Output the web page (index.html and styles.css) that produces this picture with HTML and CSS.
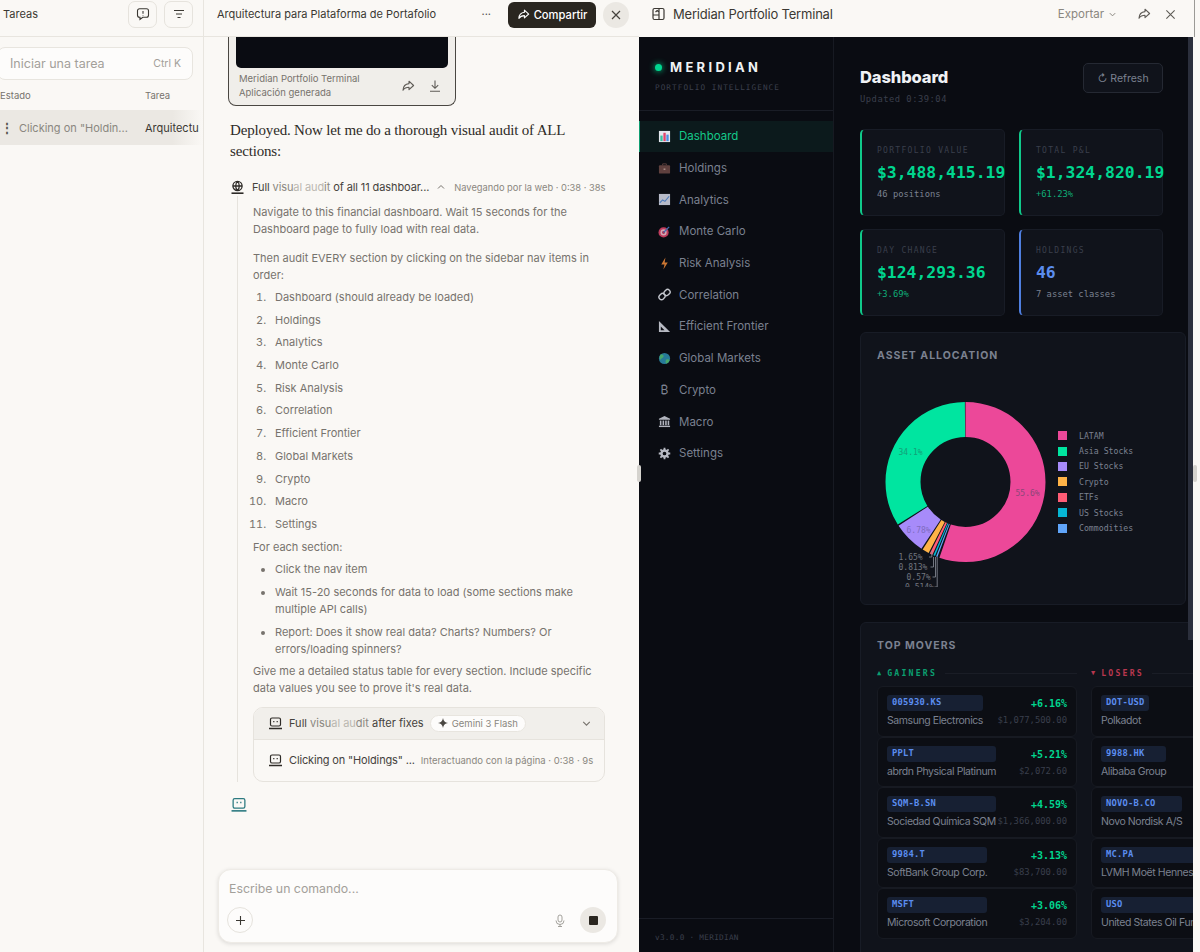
FILE: index.html
```html
<!DOCTYPE html>
<html lang="es">
<head>
  <meta charset="UTF-8" />
  <meta name="viewport" content="width=device-width, initial-scale=1.0"/>
  <title>Meridian Portfolio Terminal</title>
  <link rel="stylesheet" href="styles.css">
</head>
<body>
  <div class="tasks">
    <div class="tasks-head">
      <span class="tasks-title">Tareas</span>
      <button class="square-btn">
        <svg width="14" height="14" viewBox="0 0 14 14" fill="none" stroke="#3b3833" stroke-width="1.1"><path d="M3.5 1.8h7a2 2 0 0 1 2 2v4.4a2 2 0 0 1-2 2H6.800L4 12.400v-2.200h-.5a2 2 0 0 1-2-2V3.800a2 2 0 0 1 2-2z"/><path d="M7 4v2.800M7 8v.6"/></svg>
      </button>
      <button class="square-btn">
        <svg width="14" height="14" viewBox="0 0 14 14" fill="none" stroke="#3b3833" stroke-width="1.1"><path d="M2 3.500h10M4 7h6M5.500 10.500h3"/></svg>
      </button>
    </div>
    <div class="task-search">
      <span>Iniciar una tarea</span>
      <span class="task-kbd">Ctrl K</span>
    </div>
    <div class="task-cols">
      <span class="col-state">Estado</span>
      <span>Tarea</span>
    </div>
    <div class="task-row">
      <span class="task-dots">⋮</span>
      <span class="task-state">Clicking on "Holdin...</span>
      <span class="task-name">Arquitectu</span>
    </div>
  </div>

  <div class="chat">
    <div class="chat-head">
      <span class="chat-title">Arquitectura para Plataforma de Portafolio</span>
      <span class="chat-more">···</span>
      <button class="share-btn">
        <svg width="13" height="13" viewBox="0 0 14 14" fill="none" stroke="#fff" stroke-width="1.2" stroke-linejoin="round"><path d="M8 2.200l4.600 4.300L8 10.600V8.200c-2.800 0-4.600.8-6 3 .2-3.400 2-6.200 6-6.600z"/></svg>
        Compartir
      </button>
      <button class="close-round">
        <svg width="12" height="12" viewBox="0 0 12 12" stroke="#45423d" stroke-width="1.2"><path d="M2 2l8 8M10 2l-8 8"/></svg>
      </button>
    </div>

    <div class="chat-body">
      <div class="artifact-card">
        <div class="artifact-thumb"></div>
        <div class="artifact-meta">
          <div class="artifact-text">
            <div>Meridian Portfolio Terminal</div>
            <div>Aplicación generada</div>
          </div>
          <svg class="artifact-icon" width="14" height="14" viewBox="0 0 14 14" fill="none" stroke="#5f5c57" stroke-width="1.1" stroke-linejoin="round"><path d="M8 2.200l4.600 4.300L8 10.600V8.200c-2.800 0-4.600.8-6 3 .2-3.400 2-6.200 6-6.600z"/></svg>
          <svg class="artifact-icon" width="14" height="14" viewBox="0 0 14 14" fill="none" stroke="#5f5c57" stroke-width="1.1"><path d="M7 1.500v7.500M3.800 6.200L7 9.300l3.200-3.100M2 12.300h10"/></svg>
        </div>
      </div>

      <p class="assistant-text">Deployed. Now let me do a thorough visual audit of ALL sections:</p>

      <div class="step-head">
        <svg class="step-icon" width="15" height="15" viewBox="0 0 15 15" fill="none" stroke="#2e2b27" stroke-width="1.3"><circle cx="7.500" cy="6" r="4.600"/><path d="M2.900 6h9.200M7.500 1.400c-2.400 2.400-2.400 6.800 0 9.200M7.500 1.400c2.400 2.400 2.400 6.800 0 9.200"/><path d="M1.500 13.200h12" stroke-width="1.600"/></svg>
        <span class="step-title">Full <span class="fade-1">visu</span><span class="fade-2">al aud</span><span class="fade-1">it</span> of all 11 dashboar...</span>
        <svg class="step-caret" width="10" height="10" viewBox="0 0 10 10" fill="none" stroke="#77736d" stroke-width="1"><path d="M2 6.500L5 3.500l3 3"/></svg>
        <span class="step-meta">Navegando por la web · 0:38 · 38s</span>
      </div>

      <div class="step-body">
        <p class="para-a">Navigate to this financial dashboard. Wait 15 seconds for the Dashboard page to fully load with real data.</p>
        <p class="para-b">Then audit EVERY section by clicking on the sidebar nav items in order:</p>
        <ol>
          <li>Dashboard (should already be loaded)</li>
          <li>Holdings</li>
          <li>Analytics</li>
          <li>Monte Carlo</li>
          <li>Risk Analysis</li>
          <li>Correlation</li>
          <li>Efficient Frontier</li>
          <li>Global Markets</li>
          <li>Crypto</li>
          <li>Macro</li>
          <li>Settings</li>
        </ol>
        <p class="para-c">For each section:</p>
        <ul>
          <li>Click the nav item</li>
          <li>Wait 15-20 seconds for data to load (some sections make multiple API calls)</li>
          <li>Report: Does it show real data? Charts? Numbers? Or errors/loading spinners?</li>
        </ul>
        <p class="para-d">Give me a detailed status table for every section. Include specific data values you see to prove it's real data.</p>

        <div class="sub-box">
          <div class="sub-row sub-active">
            <svg class="step-icon" width="15" height="15" viewBox="0 0 15 15" fill="none" stroke="#2e2b27" stroke-width="1.200"><rect x="2.500" y="2" width="10" height="8" rx="1.500"/><path d="M5.800 5v1.200M9.200 5v1.200"/><path d="M1 12.500h13" stroke-width="1.500"/></svg>
            <span class="sub-title">Full <span class="fade-1">visu</span><span class="fade-2">al au</span><span class="fade-1">dit</span> after fixes</span>
            <span class="model-pill">
              <svg width="10" height="10" viewBox="0 0 10 10" fill="#4a4742"><path d="M5 0c.5 2.900 2 4.500 5 5-3 .5-4.500 2.100-5 5-.5-2.900-2-4.500-5-5 3-.5 4.500-2.100 5-5z"/></svg>
              Gemini 3 Flash
            </span>
            <svg class="sub-caret" width="11" height="11" viewBox="0 0 10 10" fill="none" stroke="#77736d" stroke-width="1"><path d="M2 3.500L5 6.500l3-3"/></svg>
          </div>
          <div class="sub-row">
            <svg class="step-icon" width="15" height="15" viewBox="0 0 15 15" fill="none" stroke="#2e2b27" stroke-width="1.200"><rect x="2.500" y="2" width="10" height="8" rx="1.500"/><path d="M5.800 5v1.200M9.200 5v1.200"/><path d="M1 12.500h13" stroke-width="1.500"/></svg>
            <span class="sub-title tight">Clicking on "Holdings" ...</span>
            <span class="sub-meta">Interactuando con la página · 0:38 · 9s</span>
          </div>
        </div>
      </div>

      <svg class="agent-icon" width="16" height="16" viewBox="0 0 15 15" fill="none" stroke="#2c7a80" stroke-width="1.200"><rect x="2" y="1.500" width="11" height="9" rx="1.500"/><path d="M5.800 4.500v1.400M9.200 4.500v1.400"/><path d="M.5 13h14" stroke-width="1.500"/></svg>
    </div>

    <div class="composer-wrap">
      <div class="composer">
        <div class="composer-input">Escribe un comando...</div>
        <div class="composer-tools">
          <button class="plus-btn">
            <svg width="11" height="11" viewBox="0 0 11 11" stroke="#3b3833" stroke-width="1.100"><path d="M5.500 1v9M1 5.500h9"/></svg>
          </button>
          <svg class="mic" width="12" height="13" viewBox="0 0 12 13" fill="none" stroke="#9a9791" stroke-width=".9"><rect x="4" y="1" width="4" height="7" rx="2"/><path d="M2 6.500a4 4 0 0 0 8 0M6 10.500v2M4 12.500h4"/></svg>
          <button class="stop-btn"><span class="stop-square"></span></button>
        </div>
      </div>
    </div>
  </div>

  <div class="preview">
    <div class="preview-head">
      <svg class="step-icon" width="13" height="14" viewBox="0 0 13 14" fill="none" stroke="#3b3833" stroke-width="1.200"><rect x="1" y="1.500" width="11" height="11" rx="1.500"/><path d="M7 1.500v11M1 8h6M3.500 5l1.700-1.500L7 5"/></svg>
      <span class="preview-title">Meridian Portfolio Terminal</span>
      <span class="export">Exportar
        <svg width="9" height="9" viewBox="0 0 10 10" fill="none" stroke="#8a8780" stroke-width="1.100"><path d="M2 3.500L5 6.500l3-3"/></svg>
      </span>
      <svg class="preview-share" width="14" height="14" viewBox="0 0 14 14" fill="none" stroke="#5f5c57" stroke-width="1.100" stroke-linejoin="round"><path d="M8 2.200l4.600 4.300L8 10.600V8.200c-2.800 0-4.600.8-6 3 .2-3.400 2-6.200 6-6.600z"/></svg>
      <svg class="preview-close" width="11" height="11" viewBox="0 0 12 12" stroke="#5f5c57" stroke-width="1.200"><path d="M1.500 1.500l9 9M10.500 1.500l-9 9"/></svg>
    </div>

    <div class="terminal">
      <aside class="side">
        <div class="brand">
          <div class="brand-line"><span class="brand-dot"></span><span class="brand-name">MERIDIAN</span></div>
          <div class="brand-sub">PORTFOLIO INTELLIGENCE</div>
        </div>
        <nav class="nav">
          <a class="nav-item active">
            <svg class="nav-icon" viewBox="0 0 14 14"><rect x="1" y="1" width="12" height="12" fill="#e4e7ee"/><rect x="2.500" y="6" width="2.500" height="6" fill="#35c2a0"/><rect x="5.800" y="3" width="2.500" height="9" fill="#e0456b"/><rect x="9" y="5" width="2.500" height="7" fill="#4a90e2"/></svg>
            Dashboard
          </a>
          <a class="nav-item">
            <svg class="nav-icon" viewBox="0 0 14 14"><path d="M5 3.500V2h4v1.500" fill="none" stroke="#6b4a44" stroke-width="1"/><rect x="1" y="3.500" width="12" height="9" rx="1" fill="#6e4a46"/><rect x="6" y="7" width="2" height="1.500" fill="#c9a9a0"/></svg>
            Holdings
          </a>
          <a class="nav-item">
            <svg class="nav-icon" viewBox="0 0 14 14"><rect x="1" y="1" width="12" height="12" fill="#d6d9e8"/><path d="M2 10.500l3-3 2.500 1.500L12 3.500" fill="none" stroke="#5b8fd8" stroke-width="1.200"/></svg>
            Analytics
          </a>
          <a class="nav-item">
            <svg class="nav-icon" viewBox="0 0 14 14"><circle cx="6" cy="8" r="5.500" fill="#e0456b"/><circle cx="6" cy="8" r="3.300" fill="#f3c4d0"/><circle cx="6" cy="8" r="1.600" fill="#c7365c"/><path d="M6 8l6-6" stroke="#4a7fd0" stroke-width="1.400"/></svg>
            Monte Carlo
          </a>
          <a class="nav-item">
            <svg class="nav-icon" viewBox="0 0 14 14"><path d="M8 .5L3.500 8H7l-1.200 5.500L10.500 6H7.200z" fill="#f08a38"/></svg>
            Risk Analysis
          </a>
          <a class="nav-item">
            <svg class="nav-icon" viewBox="0 0 14 14" fill="none" stroke="#e4e7ee" stroke-width="1.500"><rect x="7" y="1.300" width="5.500" height="7" rx="2.700" transform="rotate(45 9.700 4.800)"/><rect x="1.600" y="5.700" width="5.500" height="7" rx="2.700" transform="rotate(45 4.300 9.200)"/></svg>
            Correlation
          </a>
          <a class="nav-item">
            <svg class="nav-icon" viewBox="0 0 14 14"><path fill-rule="evenodd" d="M1 1l12 12H1zM3 7v4h4z" fill="#d6d9e3"/></svg>
            Efficient Frontier
          </a>
          <a class="nav-item">
            <svg class="nav-icon" viewBox="0 0 14 14"><circle cx="7" cy="7" r="6" fill="#2d8fb0"/><path d="M3 2.500c2 0 3.500 1 3 2.500s-3 1.500-3.500 3.500c-1.200-1.500-1.200-4 .5-6zM9 8c1.500-.5 3 0 3.500.5-.5 2-2 3.500-4 4-.5-1.500-.5-3.500.5-4.500z" fill="#52c47a"/></svg>
            Global Markets
          </a>
          <a class="nav-item">
            <span class="nav-glyph">₿</span>
            Crypto
          </a>
          <a class="nav-item">
            <svg class="nav-icon" viewBox="0 0 14 14" fill="#cfd2dc"><path d="M7 1l6 3v1H1V4z"/><rect x="2" y="6" width="1.700" height="5"/><rect x="4.900" y="6" width="1.700" height="5"/><rect x="7.700" y="6" width="1.700" height="5"/><rect x="10.400" y="6" width="1.700" height="5"/><rect x="1" y="11.500" width="12" height="1.500"/></svg>
            Macro
          </a>
          <a class="nav-item">
            <svg class="nav-icon" viewBox="0 0 14 14"><circle cx="7" cy="7" r="3.300" fill="none" stroke="#d6d9e3" stroke-width="2.600"/><path d="M7 .8v2.500M7 10.700v2.500M.8 7h2.500M10.700 7h2.500M2.600 2.600l1.800 1.800M9.600 9.600l1.800 1.800M11.400 2.600L9.600 4.400M4.400 9.600l-1.800 1.800" stroke="#d6d9e3" stroke-width="2"/></svg>
            Settings
          </a>
        </nav>
        <div class="side-foot">v3.0.0 · MERIDIAN</div>
      </aside>

      <main class="main">
        <div class="page-head">
          <div>
            <h1>Dashboard</h1>
            <div class="updated">Updated 0:39:04</div>
          </div>
          <button class="refresh">↻ Refresh</button>
        </div>

        <div class="kpis">
          <div class="kpi">
            <div class="kpi-label">PORTFOLIO VALUE</div>
            <div class="kpi-value">$3,488,415.19</div>
            <div class="kpi-sub">46 positions</div>
          </div>
          <div class="kpi">
            <div class="kpi-label">TOTAL P&amp;L</div>
            <div class="kpi-value">$1,324,820.19</div>
            <div class="kpi-sub up">+61.23%</div>
          </div>
          <div class="kpi">
            <div class="kpi-label">DAY CHANGE</div>
            <div class="kpi-value">$124,293.36</div>
            <div class="kpi-sub up">+3.69%</div>
          </div>
          <div class="kpi kpi-blue">
            <div class="kpi-label">HOLDINGS</div>
            <div class="kpi-value">46</div>
            <div class="kpi-sub">7 asset classes</div>
          </div>
        </div>

        <section class="panel alloc">
          <h2>ASSET ALLOCATION</h2>
          <div class="alloc-body">
            <svg class="donut" width="181" height="197" viewBox="0 0 181 197">
              <g transform="rotate(-90 88.500 92)" fill="none" stroke-width="35">
                <circle cx="88.500" cy="92" r="62.500" pathLength="100" stroke="#ec4899" stroke-dasharray="55.300 100"/>
                <circle cx="88.500" cy="92" r="62.500" pathLength="100" stroke="#60a5fa" stroke-dasharray=".27 100" stroke-dashoffset="-55.72"/>
                <circle cx="88.500" cy="92" r="62.500" pathLength="100" stroke="#06b6d4" stroke-dasharray=".33 100" stroke-dashoffset="-56.24"/>
                <circle cx="88.500" cy="92" r="62.500" pathLength="100" stroke="#ff5c75" stroke-dasharray=".57 100" stroke-dashoffset="-56.8"/>
                <circle cx="88.500" cy="92" r="62.500" pathLength="100" stroke="#ffb347" stroke-dasharray="1.350 100" stroke-dashoffset="-57.64"/>
                <circle cx="88.500" cy="92" r="62.500" pathLength="100" stroke="#a78bfa" stroke-dasharray="6.480 100" stroke-dashoffset="-59.29"/>
                <circle cx="88.500" cy="92" r="62.500" pathLength="100" stroke="#00e5a0" stroke-dasharray="33.800 100" stroke-dashoffset="-66.07"/>
              </g>
              <g class="slice-labels">
                <text x="138.500" y="106" fill="#8b4678">55.6%</text>
                <text x="21.500" y="65" fill="#14a078">34.1%</text>
                <text x="29.500" y="143" fill="#7f6cc0">6.78%</text>
                <text x="21.500" y="170" fill="#70757f">1.65%</text>
                <text x="21.500" y="180" fill="#70757f">0.813%</text>
                <text x="29.500" y="190" fill="#70757f">0.57%</text>
                <text x="28" y="200" fill="#70757f">0.514%</text>
              </g>
              <g fill="none" stroke="#8a8f99" stroke-width=".8">
                <path d="M52 167h2.800v-6"/>
                <path d="M53.500 177h3v-10"/>
                <path d="M55.500 187h3v-20"/>
                <path d="M57.500 197h2.700v-30"/>
              </g>
            </svg>
            <ul class="legend">
              <li><i class="swatch c-pink"></i>LATAM</li>
              <li><i class="swatch c-green"></i>Asia Stocks</li>
              <li><i class="swatch c-violet"></i>EU Stocks</li>
              <li><i class="swatch c-orange"></i>Crypto</li>
              <li><i class="swatch c-red"></i>ETFs</li>
              <li><i class="swatch c-cyan"></i>US Stocks</li>
              <li><i class="swatch c-blue"></i>Commodities</li>
            </ul>
          </div>
        </section>

        <section class="panel movers">
          <h2>TOP MOVERS</h2>
          <div class="mover-cols">
            <div class="mover-col">
              <div class="mover-head gain"><span class="mover-arrow">▲</span>GAINERS<span class="mover-rule"></span></div>
              <div class="mover"><div class="mover-left"><span class="ticker">005930.KS</span><span class="mover-name">Samsung Electronics</span></div><div class="mover-right"><span class="pct">+6.16%</span><span class="price">$1,077,500.00</span></div></div>
              <div class="mover"><div class="mover-left"><span class="ticker">PPLT</span><span class="mover-name">abrdn Physical Platinum</span></div><div class="mover-right"><span class="pct">+5.21%</span><span class="price">$2,072.60</span></div></div>
              <div class="mover"><div class="mover-left"><span class="ticker">SQM-B.SN</span><span class="mover-name">Sociedad Química SQM</span></div><div class="mover-right"><span class="pct">+4.59%</span><span class="price">$1,366,000.00</span></div></div>
              <div class="mover"><div class="mover-left"><span class="ticker">9984.T</span><span class="mover-name">SoftBank Group Corp.</span></div><div class="mover-right"><span class="pct">+3.13%</span><span class="price">$83,700.00</span></div></div>
              <div class="mover"><div class="mover-left"><span class="ticker">MSFT</span><span class="mover-name">Microsoft Corporation</span></div><div class="mover-right"><span class="pct">+3.06%</span><span class="price">$3,204.00</span></div></div>
            </div>
            <div class="mover-col">
              <div class="mover-head loss"><span class="mover-arrow">▼</span>LOSERS<span class="mover-rule"></span></div>
              <div class="mover"><div class="mover-left"><span class="ticker">DOT-USD</span><span class="mover-name">Polkadot</span></div></div>
              <div class="mover"><div class="mover-left"><span class="ticker">9988.HK</span><span class="mover-name">Alibaba Group</span></div></div>
              <div class="mover"><div class="mover-left"><span class="ticker">NOVO-B.CO</span><span class="mover-name">Novo Nordisk A/S</span></div></div>
              <div class="mover"><div class="mover-left"><span class="ticker">MC.PA</span><span class="mover-name">LVMH Moët Hennessy</span></div></div>
              <div class="mover"><div class="mover-left"><span class="ticker">USO</span><span class="mover-name">United States Oil Fund</span></div></div>
            </div>
          </div>
        </section>
      </main>
      <div class="scroll-thumb"></div>
    </div>
    <div class="split-handle"></div>
    <div class="split-handle right"></div>
  </div>
</body>
</html>
```

FILE: styles.css
```css
* {
  box-sizing: border-box;
}
body {
  margin: 0;
  width: 1200px;
  height: 952px;
  overflow: hidden;
  display: flex;
  font-family: Inter, "Liberation Sans", sans-serif;
  background-color: #faf8f5;
  color: #2e2b27;
}
button {
  font-family: inherit;
  cursor: pointer;
}
p {
  margin: 0;
}

/* tasks column */
.tasks {
  width: 204px;
  flex: none;
  border-right: 1px solid #e8e5df;
  overflow: hidden;
}
.tasks-head {
  height: 37px;
  display: flex;
  align-items: center;
  padding: 0 10px 8px 3px;
  gap: 7px;
  border-bottom: 1px solid #e8e5df;
}
.tasks-title {
  font-size: 11px;
  margin-right: auto;
  color: #3b3833;
}
.square-btn {
  width: 29px;
  height: 27px;
  display: flex;
  align-items: center;
  justify-content: center;
  background: #faf8f5;
  border: 1px solid #e6e3dd;
  border-radius: 7px;
  padding: 0;
}
.task-search {
  margin: 10px 10px 0 -3px;
  height: 33px;
  padding: 0 11px 0 12px;
  display: flex;
  justify-content: space-between;
  align-items: center;
  background: #fdfcfb;
  border: 1px solid #e8e5df;
  border-radius: 8px;
  font-size: 12.500px;
  color: #a3a09a;
}
.task-kbd {
  font-size: 10.500px;
}
.task-cols {
  display: flex;
  font-size: 9.500px;
  color: #77736d;
  height: 30px;
  align-items: center;
}
.col-state {
  width: 145px;
}
.task-row {
  height: 35px;
  display: flex;
  align-items: center;
  font-size: 11px;
  background: linear-gradient(90deg, #ebe8e3 85%, #faf8f5 100%);
  white-space: nowrap;
}
.task-dots {
  width: 14px;
  margin-right: 5px;
  text-align: center;
  font-size: 12px;
  font-weight: 700;
  color: #55524d;
}
.task-state {
  width: 126px;
  color: #8a8780;
}
.task-name {
  color: #3b3833;
}

/* chat column */
.chat {
  width: 435px;
  flex: none;
  display: flex;
  flex-direction: column;
  position: relative;
}
.chat-head {
  height: 37px;
  flex: none;
  display: flex;
  align-items: center;
  padding: 0 10px 8px 13px;
  border-bottom: 1px solid #e8e5df;
}
.chat-title {
  font-size: 11px;
  color: #3b3833;
  margin-right: auto;
}
.chat-more {
  color: #55524d;
  font-size: 11px;
  margin-right: 17px;
}
.share-btn {
  width: 88px;
  height: 26px;
  margin-top: 1px;
  display: flex;
  align-items: center;
  justify-content: center;
  gap: 4px;
  background-color: #2a2620;
  color: #fff;
  font-size: 11.200px;
  font-weight: 500;
  border: none;
  border-radius: 6px;
}
.close-round {
  width: 26px;
  height: 26px;
  margin: 1px 0 0 7px;
  padding: 0;
  display: flex;
  align-items: center;
  justify-content: center;
  background-color: #ebe8e3;
  border: none;
  border-radius: 50%;
}
.chat-body {
  flex: 1;
  padding: 0 34px 0 26px;
  overflow: hidden;
  font-size: 11px;
}
.artifact-card {
  width: 228px;
  margin-left: -2px;
  height: 69px;
  padding: 0 7px;
  background-color: #f0eeea;
  border: 1px solid #4a4742;
  border-top: none;
  border-radius: 0 0 8px 8px;
}
.artifact-thumb {
  height: 31px;
  background-color: #0a0c12;
  border-radius: 0 0 5px 5px;
}
.artifact-meta {
  display: flex;
  align-items: center;
  padding: 4px 6px 0 3px;
  gap: 13px;
}
.artifact-text {
  flex: 1;
  font-size: 9.500px;
  line-height: 13.500px;
  color: #77736d;
}
.assistant-text {
  margin: 14px 0 0 0;
  font-family: "Liberation Serif", serif;
  font-size: 15px;
  letter-spacing: -0.170px;
  line-height: 21px;
  color: #2e2b27;
}
.step-head {
  display: flex;
  align-items: center;
  height: 18px;
  margin-top: 16px;
  gap: 7px;
}
.step-icon {
  flex: none;
}
.step-title {
  font-size: 11px;
  letter-spacing: -0.100px;
  color: #45423d;
  white-space: nowrap;
}
.fade-1 {
  color: #8a8780;
}
.fade-2 {
  color: #bab7b0;
}
.step-caret {
  flex: none;
}
.step-meta {
  margin-left: 1px;
  font-size: 9.300px;
  color: #8a8780;
  white-space: nowrap;
}
.step-body {
  margin-left: 7px;
  border-left: 1px solid #e6e3dd;
  padding: 8px 0 0 15px;
  color: #77736d;
  font-size: 11px;
  line-height: 17px;
}
.para-b {
  margin-top: 12px;
}
ol, ul {
  margin: 5px 0 0 0;
  padding-left: 22px;
}
ol li {
  margin-bottom: 5.700px;
}
ol li::marker {
  content: counter(list-item) ".   ";
}
.para-c {
  margin-top: 0;
}
ul li {
  margin-bottom: 6px;
}
ul {
  margin-top: 5px;
}
.para-d {
  margin-top: -1px;
}
.sub-box {
  margin-top: 10px;
  border: 1px solid #e6e3dd;
  border-radius: 10px;
  overflow: hidden;
}
.sub-row {
  display: flex;
  align-items: center;
  height: 41px;
  padding: 0 12px 0 14px;
  gap: 6px;
  white-space: nowrap;
}
.sub-active {
  height: 32px;
  background-color: #f1efeb;
  border-bottom: 1px solid #e6e3dd;
}
.sub-title {
  font-size: 11px;
  color: #45423d;
}
.sub-title.tight {
  letter-spacing: -0.150px;
}
.model-pill {
  display: inline-flex;
  align-items: center;
  gap: 4px;
  height: 17px;
  padding: 0 7px;
  background-color: #fdfcfb;
  border: 1px solid #e8e5df;
  border-radius: 9px;
  font-size: 9.500px;
  color: #8a8780;
}
.sub-caret {
  margin-left: auto;
}
.sub-meta {
  margin-left: auto;
  font-size: 9.500px;
  color: #8a8780;
}
.agent-icon {
  display: block;
  margin: 15px 0 0 1px;
}
.composer-wrap {
  padding: 0 21px 9px 14px;
}
.composer {
  height: 74px;
  padding: 11px 11px 10px 10px;
  background-color: #fdfcfb;
  border: 1px solid #eeebe6;
  border-radius: 13px;
  box-shadow: 0 1px 4px rgba(0, 0, 0, 0.12);
}
.composer-input {
  font-size: 12.300px;
  line-height: 15px;
  color: #a3a09a;
}
.composer-tools {
  display: flex;
  align-items: center;
  margin-top: 11px;
  margin-left: -2px;
}
.plus-btn, .stop-btn {
  width: 26px;
  height: 26px;
  padding: 0;
  display: flex;
  align-items: center;
  justify-content: center;
  border-radius: 50%;
}
.plus-btn {
  background: #fdfcfb;
  border: 1px solid #e6e3dd;
}
.stop-btn {
  background-color: #ebe8e3;
  border: none;
}
.stop-square {
  width: 9px;
  height: 9px;
  background-color: #2a2620;
  border-radius: 1px;
}
.mic {
  margin-left: auto;
  margin-right: 14px;
}

/* preview column */
.preview {
  width: 561px;
  flex: none;
  position: relative;
  padding-right: 7px;
  display: flex;
  flex-direction: column;
}
.preview-head {
  height: 37px;
  flex: none;
  display: flex;
  align-items: center;
  padding: 0 18px 9px 13px;
  margin-right: -2px;
  border-right: 1px solid #9b9a96;
}
.preview-title {
  margin-left: 8px;
  font-size: 13px;
  letter-spacing: -0.200px;
  color: #3b3833;
}
.export {
  margin-left: auto;
  display: flex;
  align-items: center;
  gap: 4px;
  font-size: 11.500px;
  color: #8a8780;
}
.preview-share {
  margin-left: 20px;
}
.preview-close {
  margin-left: 14px;
}
.terminal {
  flex: 1;
  display: flex;
  min-height: 0;
  position: relative;
  overflow: hidden;
  background-color: #0a0c12;
}
.side {
  width: 195px;
  flex: none;
  display: flex;
  flex-direction: column;
  border-right: 1px solid #171a22;
}
.brand {
  height: 74px;
  padding: 22px 0 0 16px;
  border-bottom: 1px solid #1a1d26;
}
.brand-line {
  display: flex;
  align-items: center;
  gap: 8px;
}
.brand-dot {
  width: 7px;
  height: 7px;
  border-radius: 50%;
  background-color: #00d68f;
  box-shadow: 0 0 6px #00d68f;
}
.brand-name {
  font-size: 13px;
  font-weight: 700;
  letter-spacing: 3.300px;
  color: #f0f2f5;
}
.brand-sub {
  margin-top: 8px;
  font-family: "DejaVu Sans Mono", monospace;
  font-size: 7.700px;
  letter-spacing: 1.050px;
  color: #3a3f4c;
}
.nav {
  flex: 1;
  padding-top: 9.500px;
}
.nav-item {
  height: 31.700px;
  display: flex;
  align-items: center;
  padding-left: 19px;
  gap: 8px;
  font-size: 11.500px;
  color: #7b8190;
}
.nav-item.active {
  color: #14c98a;
  background-color: #0c1a1c;
  border-left: 1px solid #0f9d70;
  padding-left: 18px;
}
.nav-icon {
  width: 13px;
  height: 13px;
  flex: none;
}
.nav-item:not(.active) .nav-icon {
  opacity: 0.85;
}
.nav-glyph {
  width: 13px;
  font-size: 12px;
  text-align: center;
  color: #7b8190;
}
.side-foot {
  height: 34px;
  flex: none;
  padding: 14px 0 0 16px;
  border-top: 1px solid #1a1d26;
  font-family: "DejaVu Sans Mono", monospace;
  font-size: 7.700px;
  letter-spacing: 0.300px;
  color: #3a3f4c;
}
.main {
  flex: 1;
  min-width: 0;
  padding: 26px 0 0 26px;
  overflow: hidden;
}
.page-head {
  display: flex;
  justify-content: space-between;
  width: 303px;
}
h1 {
  margin: 2px 0 0;
  font-size: 16.500px;
  font-weight: 800;
  letter-spacing: -0.100px;
  line-height: 24px;
  color: #f0f2f5;
}
.updated {
  margin-top: 5px;
  font-family: "DejaVu Sans Mono", monospace;
  font-size: 8.800px;
  letter-spacing: 0.500px;
  color: #3a3f4c;
}
.refresh {
  width: 80px;
  height: 30px;
  background-color: #10131b;
  border: 1px solid #252933;
  border-radius: 5px;
  font-size: 10.500px;
  color: #7b8190;
}
.kpis {
  display: grid;
  grid-template-columns: 145px 144px;
  gap: 13px 14px;
  margin-top: 25px;
  width: 303px;
}
.kpi {
  height: 87px;
  padding: 16px 0 0 15px;
  background-color: #10131b;
  border: 1px solid #181c26;
  border-left: 2px solid #10c98a;
  border-radius: 5px;
  white-space: nowrap;
}
.kpi-blue {
  border-left-color: #4f7fe0;
}
.kpi-label {
  font-family: "DejaVu Sans Mono", monospace;
  font-size: 8px;
  letter-spacing: 1.300px;
  color: #3a3f4c;
}
.kpi-value {
  margin-top: 8px;
  font-family: "DejaVu Sans Mono", monospace;
  font-size: 16.400px;
  font-weight: 700;
  line-height: 20px;
  color: #00d68f;
}
.kpi-blue .kpi-value {
  color: #5b8def;
}
.kpi-sub {
  margin-top: 6px;
  font-family: "DejaVu Sans Mono", monospace;
  font-size: 8.800px;
  color: #7b8190;
}
.kpi-sub.up {
  color: #0fae78;
}
.panel {
  background-color: #10131b;
  border: 1px solid #181c26;
  border-radius: 6px;
}
.panel h2 {
  margin: 0;
  font-size: 10.500px;
  font-weight: 700;
  letter-spacing: 1px;
  color: #7b8190;
}
.alloc {
  width: 326px;
  height: 273px;
  margin-top: 16px;
  padding: 16px 16px 0;
}
.alloc-body {
  display: flex;
  align-items: flex-start;
  margin-top: 28px;
}
.donut {
  flex: none;
  display: block;
}
.slice-labels {
  font-family: "DejaVu Sans Mono", monospace;
  font-size: 8px;
}
.legend {
  list-style: none;
  margin: 0;
  padding: 38px 0 0 0;
  font-family: "DejaVu Sans Mono", monospace;
  font-size: 8.200px;
  color: #7b8190;
}
.legend li {
  height: 15.400px;
  margin: 0;
  display: flex;
  align-items: center;
  white-space: nowrap;
}
.swatch {
  width: 9px;
  height: 9px;
  margin-right: 12px;
  flex: none;
}
.c-pink { background-color: #ec4899; }
.c-green { background-color: #00e5a0; }
.c-violet { background-color: #a78bfa; }
.c-orange { background-color: #ffb347; }
.c-red { background-color: #ff5c75; }
.c-cyan { background-color: #06b6d4; }
.c-blue { background-color: #60a5fa; }
.movers {
  width: 500px;
  margin-top: 17px;
  padding: 16px 16px 0;
  height: 340px;
}
.mover-cols {
  display: grid;
  grid-template-columns: 200px 200px;
  gap: 14px;
  margin-top: 15px;
}
.mover-col {
  min-width: 0;
}
.mover-head {
  display: flex;
  align-items: center;
  height: 12px;
  margin-bottom: 7px;
  font-family: "DejaVu Sans Mono", monospace;
  font-size: 8.200px;
  font-weight: 700;
  letter-spacing: 2.200px;
}
.mover-arrow {
  margin-right: 6px;
  font-size: 7px;
  letter-spacing: 0;
}
.gain {
  color: #0b9f70;
}
.loss {
  color: #b8374f;
}
.mover-rule {
  flex: 1;
  height: 1px;
  margin-left: 8px;
  background-color: #1a1d26;
}
.mover {
  height: 50.500px;
  padding: 8px 9px 0 9px;
  display: flex;
  justify-content: space-between;
  background-color: #0c0e14;
  border: 1px solid #171a22;
  border-radius: 6px;
  white-space: nowrap;
}
.mover-left {
  display: inline-flex;
  flex-direction: column;
  align-items: stretch;
}
.ticker {
  height: 16px;
  padding: 0 5px;
  background-color: #172033;
  border-radius: 3px;
  font-family: "DejaVu Sans Mono", monospace;
  font-size: 8.800px;
  font-weight: 700;
  line-height: 15px;
  letter-spacing: 0.200px;
  color: #5b8def;
}
.mover-name {
  margin-top: 2px;
  font-size: 10.500px;
  letter-spacing: -0.420px;
  line-height: 15px;
  color: #7b8190;
}
.mover-right {
  display: flex;
  flex-direction: column;
  align-items: flex-end;
}
.pct {
  margin-top: 3px;
  font-family: "DejaVu Sans Mono", monospace;
  font-size: 10px;
  font-weight: 700;
  color: #00d68f;
}
.price {
  margin-top: 6px;
  font-family: "DejaVu Sans Mono", monospace;
  font-size: 8.900px;
  color: #3a3f4c;
}
.scroll-thumb {
  position: absolute;
  top: 0;
  right: 0;
  width: 5px;
  height: 603px;
  background-color: #2b2f3c;
}
.split-handle {
  position: absolute;
  left: -2px;
  top: 465px;
  width: 4px;
  height: 17px;
  background-color: #d5d3ce;
  border-radius: 2px;
}
.split-handle.right {
  left: 554px;
  top: 465px;
}
```
